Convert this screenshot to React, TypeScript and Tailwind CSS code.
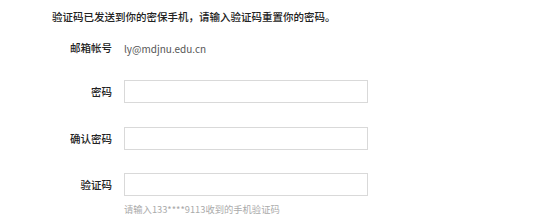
import React from "react";

const font = { fontFamily: '"Microsoft YaHei", "Noto Sans CJK SC", "Noto Sans", sans-serif' };

function Row({ label, children, className = "" }: { label: string; children: React.ReactNode; className?: string }) {
  return (
    <div className={`flex items-center ${className}`}>
      <div className="w-[112px] shrink-0 text-right text-[10.5px] font-medium text-[#222]">{label}</div>
      <div className="ml-[12px] flex items-center">{children}</div>
    </div>
  );
}

export default function App() {
  return (
    <div className="h-[220px] w-[553px] bg-white" style={font}>
      <div className="pl-[52px] pt-[9px] text-[10.5px] font-medium leading-[16px] text-[#222]">
        验证码已发送到你的密保手机，请输入验证码重置你的密码。
      </div>
      <Row label="邮箱帐号" className="mt-[15px] h-[16px]">
        <span className="text-[10px] text-[#555]">ly@mdjnu.edu.cn</span>
      </Row>
      <Row label="密码" className="mt-[24px]">
        <div className="h-[23px] w-[244px] border border-[#d9d9d9] bg-white" />
      </Row>
      <Row label="确认密码" className="mt-[24px]">
        <div className="h-[23px] w-[244px] border border-[#d9d9d9] bg-white" />
      </Row>
      <Row label="验证码" className="mt-[23px]">
        <div className="h-[23px] w-[244px] border border-[#d9d9d9] bg-white" />
      </Row>
      <div className="ml-[124px] mt-[6px] text-[9.3px] leading-[14px] text-[#aaa]">请输入133****9113收到的手机验证码</div>
    </div>
  );
}
